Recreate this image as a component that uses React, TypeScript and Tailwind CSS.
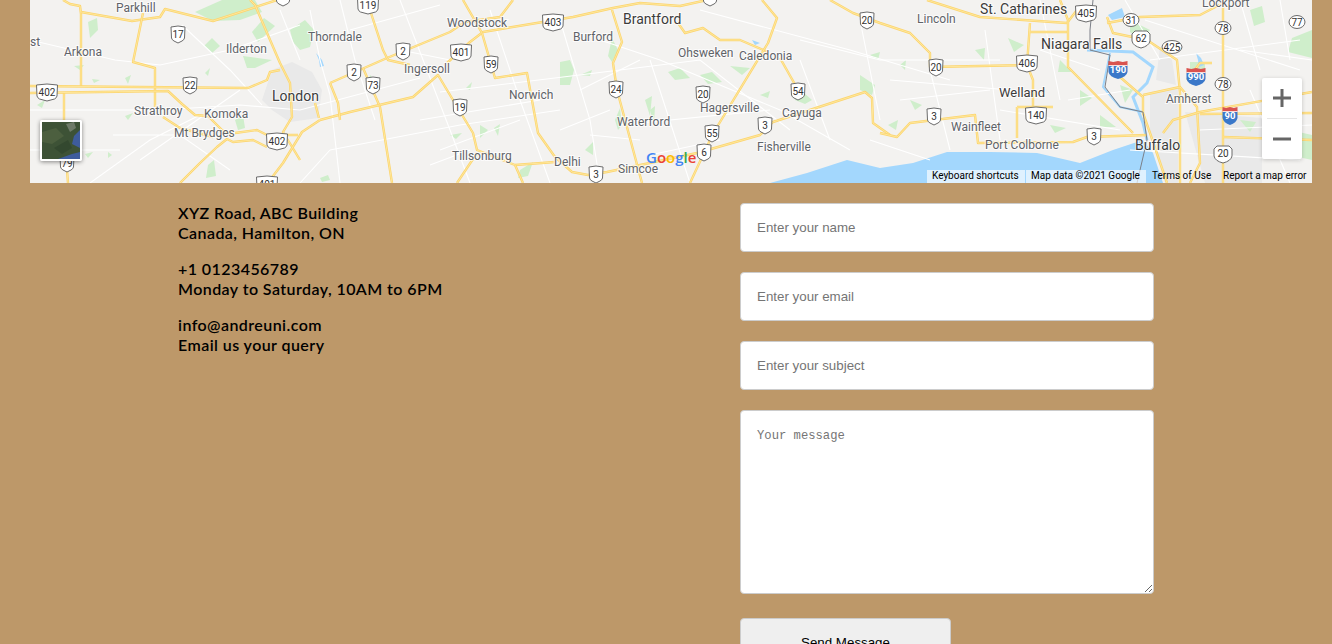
const YELLOW = [
  "M63 0L70 4L80 6L81 14L81 86",
  "M81 12L132 21L160 17L165 9L213 21L277 0",
  "M143 13L133 62L155 68L155 107",
  "M250 0L255 5L280 63L290 83L292 117L283 132L300 160",
  "M30 86L248 88L267 80L270 72L280 70",
  "M330 83L387 58L450 32L465 22L500 17L513 0",
  "M370 10L383 50L388 60L410 65",
  "M363 68L380 107L392 183",
  "M320 120L350 112L413 97L438 75L453 100L473 133L477 150L515 165L555 162",
  "M320 120L302 132L283 163L270 180",
  "M235 133L257 130L267 135L298 135",
  "M180 183L200 163L217 147L227 139L233 142L253 140L267 147",
  "M64 93L64 120M67 170L68 183",
  "M330 83L338 103L340 120M315 103L319 118",
  "M163 117L180 128L213 137",
  "M30 93L168 91L182 104L195 115L208 116L222 130L232 136",
  "M447 63L470 42L483 32L573 17L613 8L640 3L680 6L707 0",
  "M463 0L482 33L495 78L527 73L538 133L555 157L572 172L588 175L607 172L697 153L760 135L773 122L865 92L872 98L873 123L890 135",
  "M515 165L523 183M477 153L457 183",
  "M612 10L622 42L613 63L617 90L642 183",
  "M678 23L685 33L703 28L720 40L740 40L768 52",
  "M762 0L777 18L768 43L717 127L710 140L690 183",
  "M780 58L797 88",
  "M830 0L853 13L880 23L910 33L930 53L930 67L1027 65L1033 80L1033 110",
  "M927 0L980 17L1067 23L1077 10",
  "M1030 23L1027 65M1030 32L1067 32",
  "M1068 20L1068 67L1133 133",
  "M880 133L897 137L910 123L975 115L978 143L1073 142L1087 137L1147 135",
  "M1017 107L1017 138M1017 107L1053 107",
  "M1060 0L1068 20M1107 17L1113 33L1147 40L1177 60L1180 93L1180 183",
  "M1107 23L1140 17L1200 15L1223 3",
  "M1223 0L1223 183",
  "M1120 77L1143 97L1143 113L1150 133L1167 183",
  "M1143 95L1180 87L1197 107L1200 163L1190 183",
  "M1163 133L1173 120L1200 112L1312 92",
  "M1200 114L1312 113M1223 137L1312 140",
  "M1187 80L1200 63L1212 63",
];

const WHITE = [
  "M30 40L115 60L160 65L230 50L300 25",
  "M30 110L160 110L240 105L300 110L420 78",
  "M182 25L230 70L262 105M140 160L240 90",
  "M90 183L150 140L200 115M113 135L180 135L230 170",
  "M310 10L320 60L330 95L340 183M340 0L355 60L375 120",
  "M280 10L300 60M400 0L450 130L470 183",
  "M330 150L460 125L560 110M300 183L330 150",
  "M350 30L440 5M400 50L450 60M420 120L540 100",
  "M440 92L620 70L700 60L790 130",
  "M490 10L520 100L550 183M560 20L590 120L600 183",
  "M650 60L690 183M600 40L660 60L780 110L850 150",
  "M580 90L640 60M620 125L770 110M650 155L720 140",
  "M700 10L850 50L950 80M800 60L830 140M860 20L880 120",
  "M800 40L880 60L1000 60M890 80L1010 90M900 100L990 90",
  "M930 70L950 150M985 30L1000 140M1040 0L1060 100",
  "M1000 110L1120 130M1068 100L1130 90M1040 50L1100 70",
  "M1125 0L1160 60M1145 20L1300 70M1240 50L1312 60",
  "M1150 60L1300 40M1200 130L1312 125M1250 90L1290 183",
  "M1240 0L1260 70M1280 0L1290 60M1130 150L1300 160",
  "M30 150L120 150M440 150L520 120M870 140L930 160",
  "M560 130L610 110M590 135L640 140M430 165L470 150",
];

const GREEN = [
  "M195 12L222 0L255 0L262 12L240 20L213 21Z",
  "M264 18L275 26L258 42L252 32Z",
  "M290 30L305 20L314 30L310 47L300 50L293 42Z",
  "M243 56L272 60L255 68L247 68Z",
  "M204 46L212 38L220 46L212 53Z",
  "M88 22L97 18L98 30L90 38Z",
  "M560 62L570 60L574 70L570 85L560 85Z",
  "M612 38L618 50L612 62L608 56Z",
  "M615 120L620 108L622 125L618 130Z",
  "M668 72L680 68L690 78L675 80Z",
  "M700 75L712 72L722 82L708 84Z",
  "M730 66L750 68L742 75Z",
  "M795 85L812 100L805 104L795 100Z",
  "M860 75L875 85L872 95L860 90Z",
  "M975 50L985 48L984 60Z",
  "M1060 60L1072 72L1058 72Z",
  "M1008 38L1024 45L1014 52Z",
  "M1130 20L1150 30L1142 42L1130 32Z",
  "M1292 38L1312 30L1312 58L1288 52Z",
  "M1250 10L1262 6L1265 22L1254 26Z",
  "M1190 62L1205 62L1205 70L1190 70Z",
  "M1080 90L1092 98L1080 106Z",
  "M1050 125L1066 128L1055 133Z",
  "M1100 115L1116 127L1100 127Z",
  "M1120 85L1133 90L1125 103Z",
  "M910 100L922 105L915 110Z",
  "M1290 130L1312 135L1312 160L1294 156Z",
  "M1240 120L1256 122L1250 132Z",
  "M888 125L898 120L896 130Z",
  "M1000 165L1016 159L1012 169Z",
  "M585 150L593 142L593 155Z",
  "M480 125L488 130L480 138Z",
  "M520 170L533 162L528 176L518 178Z",
  "M650 110L655 106L654 124Z",
  "M74 66L84 65L80 70Z", "M92 79L100 80L94 83Z", "M125 78L131 75L128 84Z", "M37 105L45 100L42 108Z",
  "M125 116L133 113L128 120Z", "M205 73L210 68L208 76Z", "M235 120L243 115L245 128L238 130Z", "M85 154L93 152L88 158Z",
  "M108 152L112 155L108 158Z", "M208 165L214 160L216 176L206 178Z", "M320 178L328 175L330 180L322 182Z", "M370 75L375 80L368 82Z",
  "M466 88L472 82L470 90Z", "M450 135L462 133L456 139Z", "M494 128L500 124L498 136Z", "M580 75L592 70L590 76Z",
  "M645 100L652 96L650 116Z", "M760 95L770 91L768 98Z", "M900 65L906 60L905 70Z", "M870 55L880 52L878 60Z",
];

const URBAN = [
  "M272 70L292 62L312 72L322 90L318 118L290 122L272 110L262 100Z",
  "M1150 92L1178 88L1178 183L1165 183L1150 135Z",
  "M1185 112L1262 118L1262 183L1205 183Z",
  "M1160 47L1172 60L1176 85L1156 80Z",
];

const LABELS: [string, number, number, number?][] = [
  ["Parkhill", 116, 12], ["Arkona", 64, 56], ["Thorndale", 308, 41], ["Ilderton", 226, 53],
  ["London", 272, 101, 14], ["Strathroy", 134, 115], ["Komoka", 204, 118], ["Mt Brydges", 174, 137],
  ["Ingersoll", 404, 73], ["st", 30, 46], ["Woodstock", 447, 27], ["Burford", 573, 41],
  ["Brantford", 623, 24, 14], ["Ohsweken", 678, 57], ["Caledonia", 739, 60], ["Norwich", 509, 99],
  ["Hagersville", 700, 112], ["Cayuga", 782, 117], ["Waterford", 617, 126], ["Fisherville", 757, 151],
  ["Tillsonburg", 452, 160], ["Delhi", 554, 166], ["Simcoe", 618, 173], ["Lincoln", 917, 23],
  ["St. Catharines", 980, 14, 14], ["Niagara Falls", 1041, 49, 14], ["Lockport", 1202, 7],
  ["Welland", 999, 97, 13], ["Amherst", 1166, 103], ["Wainfleet", 951, 131], ["Port Colborne", 985, 149],
  ["Buffalo", 1135, 150, 14],
];

const SHIELDS: [string, number, number][] = [
  ["17", 178, 34], ["22", 190, 85], ["402", 47, 92], ["402", 277, 141], ["401", 267, 184], ["79", 67, 163],
  ["119", 368, 5], ["2", 403, 51], ["2", 354, 72], ["73", 373, 85], ["403", 553, 22], ["401", 461, 52],
  ["59", 491, 64], ["19", 460, 107], ["24", 616, 89], ["20", 703, 94], ["54", 798, 91], ["3", 765, 125],
  ["55", 712, 133], ["6", 704, 152], ["3", 596, 174], ["20", 867, 20], ["20", 936, 67], ["406", 1027, 63],
  ["140", 1036, 115], ["3", 934, 116], ["3", 1094, 136], ["405", 1086, 13], ["", 283, -3], ["", 710, -3],
];

const OVALS: [string, number, number][] = [
  ["31", 1131, 20], ["425", 1172, 47], ["78", 1223, 28], ["78", 1223, 84], ["77", 1297, 22],
];

function Shield({ label, x, y }: { label: string; x: number; y: number }) {
  const w = label.length > 2 ? 10.5 : 7;
  return (
    <g transform={`translate(${x} ${y})`}>
      <path
        d={`M${-w} -7Q0 -9 ${w} -7L${w - 0.5} 4Q${w - 1} 6 ${w - 3} 7L0 9L${3 - w} 7Q${1 - w} 6 ${0.5 - w} 4Z`}
        fill="#fff"
        stroke="#6b6b6b"
        strokeWidth="1"
      />
      <text x="0" y="3.5" textAnchor="middle" fontSize="10" fill="#333">{label}</text>
    </g>
  );
}

function Oval({ label, x, y }: { label: string; x: number; y: number }) {
  const rx = label.length > 2 ? 10 : 8;
  return (
    <g transform={`translate(${x} ${y})`}>
      <ellipse rx={rx} ry="6.5" fill="#fff" stroke="#6b6b6b" />
      <text x="0" y="3.5" textAnchor="middle" fontSize="10" fill="#333">{label}</text>
    </g>
  );
}

function UsShield({ label, x, y }: { label: string; x: number; y: number }) {
  return (
    <g transform={`translate(${x} ${y})`}>
      <path d="M-6 -8L6 -8L9 -5L9 2Q8 7 0 9Q-8 7 -9 2L-9 -5Z" fill="#fff" stroke="#6b6b6b" />
      <text x="0" y="3" textAnchor="middle" fontSize="10" fill="#333">{label}</text>
    </g>
  );
}

function Interstate({ label, x, y }: { label: string; x: number; y: number }) {
  const w = label.length > 2 ? 9.5 : 7.5;
  return (
    <g transform={`translate(${x} ${y})`}>
      <path d={`M${-w} -3L${w} -3L${w} 3Q${w - 1} 8 0 10Q${1 - w} 8 ${-w} 3Z`} fill="#3b78c9" />
      <path d={`M${-w} -8L${-w / 2} -7L0 -8L${w / 2} -7L${w} -8L${w} -3L${-w} -3Z`} fill="#d9534f" />
      <path d={`M${-w} -3.5H${w}`} stroke="#fff" strokeWidth="0.8" />
      <text x="0" y="4" textAnchor="middle" fontSize="9.5" fontWeight="700" fill="#fff">{label}</text>
    </g>
  );
}

function MapArt() {
  return (
    <svg
      viewBox="30 0 1282 183"
      className="block h-full w-full"
      style={{ fontFamily: "Roboto, sans-serif" }}
    >
      <rect x="30" y="0" width="1282" height="183" fill="#f3f2f0" />
      {URBAN.map((d) => <path key={d} d={d} fill="#e9e9e9" />)}
      {GREEN.map((d) => <path key={d} d={d} fill="#cfeecb" />)}
      <path
        d="M770 183L807 173L847 160L880 168L913 163L947 152L990 152L1037 153L1080 163L1113 150L1143 140L1153 153L1163 183Z"
        fill="#a3d7fd"
      />
      <path
        d="M1087 50L1133 52L1153 67L1147 83L1133 97L1143 123L1147 140"
        fill="none"
        stroke="#a3d7fd"
        strokeWidth="3"
      />
      <path
        d="M1110 53L1103 87L1120 107L1143 112"
        fill="none"
        stroke="#a3d7fd"
        strokeWidth="2"
      />
      <path d="M1108 15L1122 8L1125 17L1112 20Z" fill="#a3d7fd" />
      <path d="M1196 53L1201 58L1204 65L1199 67L1198 60Z M752 40L760 43L755 45Z" fill="#a3d7fd" />
      <path d="M316 53L322 60L324 66L320 67L319 60Z" fill="#a3d7fd" />
      {WHITE.map((d) => <path key={d} d={d} fill="none" stroke="#fff" strokeWidth="1.1" />)}
      {YELLOW.map((d) => (
        <g key={d} fill="none" strokeLinejoin="round">
          <path d={d} stroke="#fcd56f" strokeWidth="2.4" />
          <path d={d} stroke="#fee9a0" strokeWidth="0.9" />
        </g>
      ))}
      <path
        d="M1093 0L1090 30L1090 50L1110 55L1105 87L1120 107L1143 112L1147 140L1137 183"
        fill="none"
        stroke="#7b7f88"
        strokeWidth="1"
      />
      {LABELS.map(([text, x, y, size]) => (
        <text
          key={text}
          x={x}
          y={y}
          fontSize={size ?? 12}
          fill={size ? "#3c3c3c" : "#5f6368"}
          stroke="#fff"
          strokeWidth="2"
          strokeOpacity="0.75"
          paintOrder="stroke"
        >
          {text}
        </text>
      ))}
      {SHIELDS.map(([label, x, y]) => <Shield key={`${label}-${x}`} label={label} x={x} y={y} />)}
      {OVALS.map(([label, x, y]) => <Oval key={`${label}-${y}`} label={label} x={x} y={y} />)}
      <UsShield label="62" x={1141} y={39} />
      <UsShield label="20" x={1223} y={154} />
      <Interstate label="190" x={1118} y={69} />
      <Interstate label="990" x={1196} y={76} />
      <Interstate label="90" x={1230} y={115} />
      <text x="646" y="163" fontSize="15" fontWeight="600" style={{ fontFamily: "'Open Sans', sans-serif" }}>
        <tspan fill="#4285f4">G</tspan>
        <tspan fill="#ea4335">o</tspan>
        <tspan fill="#fbbc05">o</tspan>
        <tspan fill="#4285f4">g</tspan>
        <tspan fill="#34a853">l</tspan>
        <tspan fill="#ea4335">e</tspan>
      </text>
    </svg>
  );
}

function MapControls() {
  return (
    <>
      <div className="absolute left-[10px] top-[120px] h-[41px] w-[42px] overflow-hidden rounded-[2px] border-2 border-white shadow-[0_1px_4px_rgba(0,0,0,0.45)]">
        <svg viewBox="0 0 38 37" className="block h-full w-full">
          <rect width="38" height="37" fill="#3d5236" />
          <path d="M0 10L14 6L22 14L10 22L0 20Z" fill="#4c5f3f" />
          <path d="M12 26L26 18L30 26L20 32Z" fill="#33482f" />
          <path d="M38 8L32 14L30 22L38 26Z" fill="#3e5c9c" />
          <path d="M16 37L30 32L38 30L38 37Z" fill="#3e5c9c" />
          <path d="M24 2L32 0L34 6L28 10Z" fill="#6e7a68" />
        </svg>
      </div>
      <div className="absolute left-[1232px] top-[78px] flex h-[81px] w-10 flex-col items-center rounded-[2px] bg-white shadow-[0_1px_4px_rgba(0,0,0,0.2)]">
        <svg viewBox="0 0 18 18" className="mt-[11px] h-[18px] w-[18px]" fill="#666">
          <path d="M7.5 0H10.5V7.5H18V10.5H10.5V18H7.5V10.5H0V7.5H7.5Z" />
        </svg>
        <div className="mt-[11px] h-px w-[30px] bg-[#e6e6e6]" />
        <svg viewBox="0 0 18 18" className="mt-[11px] h-[18px] w-[18px]" fill="#666">
          <path d="M0 7.5H18V10.5H0Z" />
        </svg>
      </div>
      <div className="absolute bottom-0 right-0 flex h-[13px] items-center text-[10px] leading-[12px] text-black [font-family:Roboto,sans-serif]">
        <span className="h-[13px] w-[98px] whitespace-nowrap bg-white/65 pl-[5px]">Keyboard shortcuts</span>
        <span className="ml-px h-[13px] w-[120px] whitespace-nowrap bg-white/65 pl-[5px]">Map data ©2021 Google</span>
        <span className="ml-px h-[13px] w-[76px] whitespace-nowrap pl-[5px]">Terms of Use</span>
        <span className="h-[13px] w-[89px] whitespace-nowrap">Report a map error</span>
      </div>
    </>
  );
}

const fieldClass =
  "block w-full rounded border border-[#cccccc] bg-white px-4 pb-px text-[13.33px] text-black outline-none placeholder:text-[#757575] [font-family:'Liberation_Sans',Arial,sans-serif]";

export default function App() {
  return (
    <div className="h-screen overflow-hidden bg-[#bd9869]">
      <div className="relative ml-[30px] h-[183px] w-[1282px] overflow-hidden">
        <MapArt />
        <MapControls />
      </div>
      <div className="flex pl-[178px] pt-5">
        <div className="w-[562px] text-[16px] font-semibold leading-5 tracking-[0.43px] text-black [font-family:Lato,sans-serif]">
          <p className="mb-4">XYZ Road, ABC Building<br />Canada, Hamilton, ON</p>
          <p className="mb-4">+1 0123456789<br />Monday to Saturday, 10AM to 6PM</p>
          <p>info@andreuni.com<br />Email us your query</p>
        </div>
        <form className="flex w-[414px] flex-col gap-5">
          <input className={`${fieldClass} h-[49px]`} placeholder="Enter your name" />
          <input className={`${fieldClass} h-[49px]`} placeholder="Enter your email" />
          <input className={`${fieldClass} h-[49px]`} placeholder="Enter your subject" />
          <textarea
            className="block h-[184px] w-full rounded border border-[#cccccc] bg-white px-4 pt-[18px] text-[12.2px] leading-[14px] text-black outline-none placeholder:text-[#757575] [font-family:'Liberation_Mono',monospace]"
            placeholder="Your message"
          />
          <button
            type="button"
            className="mt-1 h-[50px] w-[211px] rounded border border-[#cccccc] bg-[#efefef] text-[13.33px] text-black [font-family:'Liberation_Sans',Arial,sans-serif]"
          >
            Send Message
          </button>
        </form>
      </div>
    </div>
  );
}
